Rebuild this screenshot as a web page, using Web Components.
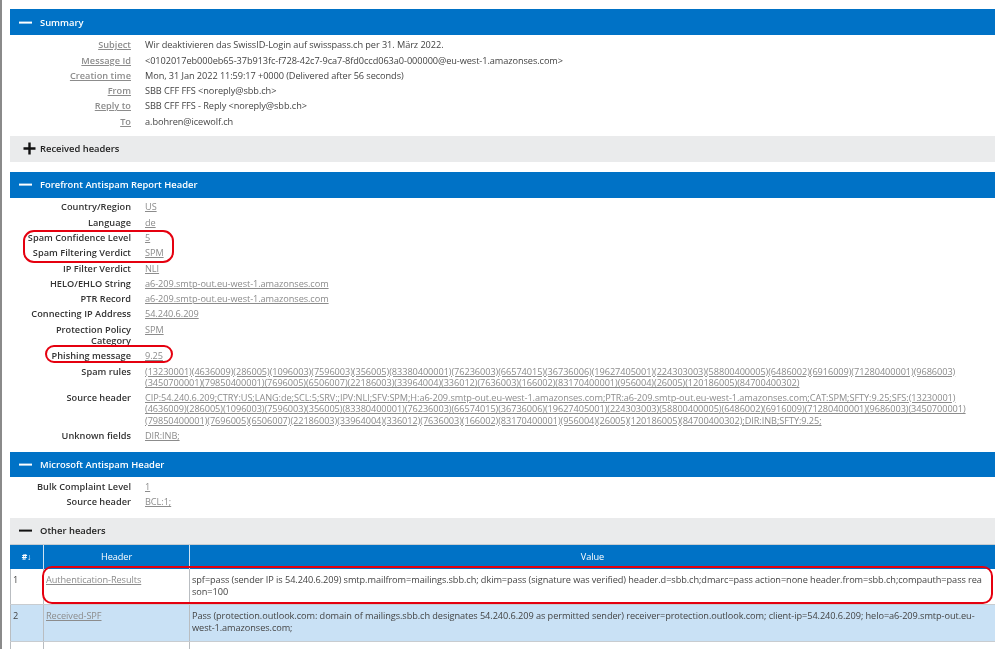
<!DOCTYPE html>
<html lang="en"><head><meta charset="utf-8"><title>Message Header Analyzer</title>
<style>
html,body{margin:0;padding:0;background:#fff;height:649px;overflow:hidden}
body{font-family:"Open Sans","Noto Sans",sans-serif;font-size:9.2px;letter-spacing:-.07px;color:#444}
</style></head><body>
<mha-page>
  <mha-section heading="Summary" tone="blue" open style="--top:9px;--bp:2.35px">
    <mha-row label="Subject" lnk>Wir deaktivieren das SwissID-Login auf swisspass.ch per 31. März 2022.</mha-row>
    <mha-row label="Message Id" lnk>&lt;0102017eb000eb65-37b913fc-f728-42c7-9ca7-8fd0ccd063a0-000000@eu-west-1.amazonses.com&gt;</mha-row>
    <mha-row label="Creation time" lnk>Mon, 31 Jan 2022 11:59:17 +0000 (Delivered after 56 seconds)</mha-row>
    <mha-row label="From" lnk>SBB CFF FFS &lt;noreply@sbb.ch&gt;</mha-row>
    <mha-row label="Reply to" lnk>SBB CFF FFS - Reply &lt;noreply@sbb.ch&gt;</mha-row>
    <mha-row label="To" lnk>a.bohren@icewolf.ch</mha-row>
  </mha-section>
  <mha-section heading="Received headers" tone="grey" style="--top:6.85px"></mha-section>
  <mha-section heading="Forefront Antispam Report Header" tone="blue" open style="--top:10px;--bp:1.65px">
    <mha-row label="Country/Region" val>US</mha-row>
    <mha-row label="Language" val>de</mha-row>
    <mha-row label="Spam Confidence Level" val>5</mha-row>
    <mha-row label="Spam Filtering Verdict" val>SPM</mha-row>
    <mha-row label="IP Filter Verdict" val>NLI</mha-row>
    <mha-row label="HELO/EHLO String" val>a6-209.smtp-out.eu-west-1.amazonses.com</mha-row>
    <mha-row label="PTR Record" val>a6-209.smtp-out.eu-west-1.amazonses.com</mha-row>
    <mha-row label="Connecting IP Address" val>54.240.6.209</mha-row>
    <mha-row label="Protection Policy|Category" val>SPM</mha-row>
    <mha-row label="Phishing message" val style="--pt:1.5px">9.25</mha-row>
    <mha-row label="Spam rules" val style="--pt:2.5px">(13230001)(4636009)(286005)(1096003)(7596003)(356005)(83380400001)(76236003)(66574015)(36736006)(19627405001)(224303003)(58800400005)(6486002)(6916009)(71280400001)(9686003)<br>(3450700001)(79850400001)(7696005)(6506007)(22186003)(33964004)(336012)(7636003)(166002)(83170400001)(956004)(26005)(120186005)(84700400302)</mha-row>
    <mha-row label="Source header" val style="--pt:1.1px">CIP:54.240.6.209;CTRY:US;LANG:de;SCL:5;SRV:;IPV:NLI;SFV:SPM;H:a6-209.smtp-out.eu-west-1.amazonses.com;PTR:a6-209.smtp-out.eu-west-1.amazonses.com;CAT:SPM;SFTY:9.25;SFS:(13230001)<br>(4636009)(286005)(1096003)(7596003)(356005)(83380400001)(76236003)(66574015)(36736006)(19627405001)(224303003)(58800400005)(6486002)(6916009)(71280400001)(9686003)(3450700001)<br>(79850400001)(7696005)(6506007)(22186003)(33964004)(336012)(7636003)(166002)(83170400001)(956004)(26005)(120186005)(84700400302);DIR:INB;SFTY:9.25;</mha-row>
    <mha-row label="Unknown fields" val>DIR:INB;</mha-row>
  </mha-section>
  <mha-section heading="Microsoft Antispam Header" tone="blue" open style="--top:8px;--bp:1.85px;--hh:25.5px">
    <mha-row label="Bulk Complaint Level" val>1</mha-row>
    <mha-row label="Source header" val>BCL:1;</mha-row>
  </mha-section>
  <mha-section heading="Other headers" tone="grey" open style="--top:8px;--bp:0px">
    <mha-table>
      <mha-tr num="1" name="Authentication-Results">spf=pass (sender IP is 54.240.6.209) smtp.mailfrom=mailings.sbb.ch; dkim=pass (signature was verified) header.d=sbb.ch;dmarc=pass action=none header.from=sbb.ch;compauth=pass rea<br>son=100</mha-tr>
      <mha-tr num="2" name="Received-SPF" alt style="--rh:37px">Pass (protection.outlook.com: domain of mailings.sbb.ch designates 54.240.6.209 as permitted sender) receiver=protection.outlook.com; client-ip=54.240.6.209; helo=a6-209.smtp-out.eu-<br>west-1.amazonses.com;</mha-tr>
      <mha-tr></mha-tr>
    </mha-table>
  </mha-section>
  <mha-mark style="left:21px;top:230px;width:151px;height:33px;--r:11px"></mha-mark>
  <mha-mark style="left:43px;top:345px;width:128px;height:18px;--r:9px"></mha-mark>
  <mha-mark style="left:40px;top:566px;width:951px;height:38px;--r:10px"></mha-mark>
</mha-page>
<script>
function def(name, html, init){
  customElements.define(name, class extends HTMLElement{
    connectedCallback(){
      if(this.shadowRoot) return;
      const s=this.attachShadow({mode:'open'});
      s.innerHTML=html;
      if(init) init.call(this,s);
    }
  });
}
def('mha-page',`<style>:host{display:block;position:relative;height:649px;overflow:hidden;box-sizing:border-box;padding:0 5px 0 10px;border-left:2px solid #8a8a8a;filter:blur(.3px)}
  .w{margin-left:-2px;display:flow-root}</style><div class="w"><slot></slot></div>`);
def('mha-section',`<style>:host{display:block;margin-top:var(--top,0)}
  .h{height:var(--hh,26px);display:flex;align-items:center;gap:8px;padding-left:9px;font-weight:600;font-size:9.4px;letter-spacing:0;box-sizing:border-box}
  .blue{background:#0072c6;color:#fff;--ic:#fff}
  .grey{background:#eaebec;color:#222;--ic:#111}
  svg{width:13px;height:13px;flex:none;display:block}
  .plus{margin-left:4px;margin-right:-4px}
  .b{padding-top:var(--bp,0)}
  </style><div class="h"><svg viewBox="0 0 13 13"></svg><span></span></div><div class="b"><slot></slot></div>`,
  function(s){
    const open=this.hasAttribute('open');
    s.querySelector('.h').classList.add(this.getAttribute('tone'));
    s.querySelector('span').textContent=this.getAttribute('heading');
    const svg=s.querySelector('svg');
    svg.innerHTML=open?'<rect x="0" y="5.6" width="13" height="2" fill="var(--ic)"/>':
      '<path d="M6.5 .5v12M.5 6.5h12" stroke="var(--ic)" stroke-width="2.4" fill="none"/>';
    if(!open){svg.classList.add('plus');s.querySelector('.b').style.display='none';}
  });
def('mha-row',`<style>:host{display:grid;grid-template-columns:121px minmax(0,1fr);column-gap:14px;padding-top:var(--pt,1.9px);padding-bottom:1.9px;line-height:11.5px}
  .l{text-align:right;font-weight:600;color:#333;letter-spacing:.03px;white-space:pre-line}
  .v{white-space:nowrap}
  .lnk .l{color:#8c8c8c;text-decoration:underline}
  .val .v{color:#8c8c8c;text-decoration:underline}
  </style><div class="w" style="display:contents"><div class="l"></div><div class="v"><slot></slot></div></div>`,
  function(s){
    s.querySelector('.l').textContent=this.getAttribute('label').replace('|','\n');
    if(this.hasAttribute('lnk')) s.querySelector('.w').classList.add('lnk');
    if(this.hasAttribute('val')) s.querySelector('.w').classList.add('val');
  });
def('mha-table',`<style>:host{display:block}
  .hd{display:grid;grid-template-columns:33px 146px minmax(0,1fr);height:25.3px;background:#0072c6;color:#fff;text-align:center;align-items:stretch;border-top:1px solid #c8ccd0;box-sizing:border-box}
  .hd div{display:flex;align-items:center;justify-content:center;border-left:1px solid #cfe3f3}
  .hd div:first-child{border-left:0;font-weight:700;font-size:8.5px}
  </style><div class="hd"><div>#↓</div><div>Header</div><div>Value</div></div><slot></slot>`);
def('mha-tr',`<style>:host{display:grid;grid-template-columns:33px 146px minmax(0,1fr);height:var(--rh,36px);box-sizing:border-box;border-bottom:1px solid #c8ccd0;line-height:11.5px}
  :host([alt]){background:#c9e1f5}
  div{padding:5.25px 2px 0 2px;border-left:1px solid #b9bdc1;white-space:nowrap}
  div:first-child{border-left:0;padding-left:3px}
  .n{color:#8c8c8c;text-decoration:underline}
  </style><div></div><div><span class="n"></span></div><div><slot></slot></div>`,
  function(s){
    s.querySelector('div').textContent=this.getAttribute('num')||'';
    s.querySelector('.n').textContent=this.getAttribute('name')||'';
  });
def('mha-mark',`<style>:host{display:block;position:absolute;box-sizing:border-box;border:2px solid #e5000f;border-radius:var(--r,10px);pointer-events:none}</style>`);
</script>
</body></html>
